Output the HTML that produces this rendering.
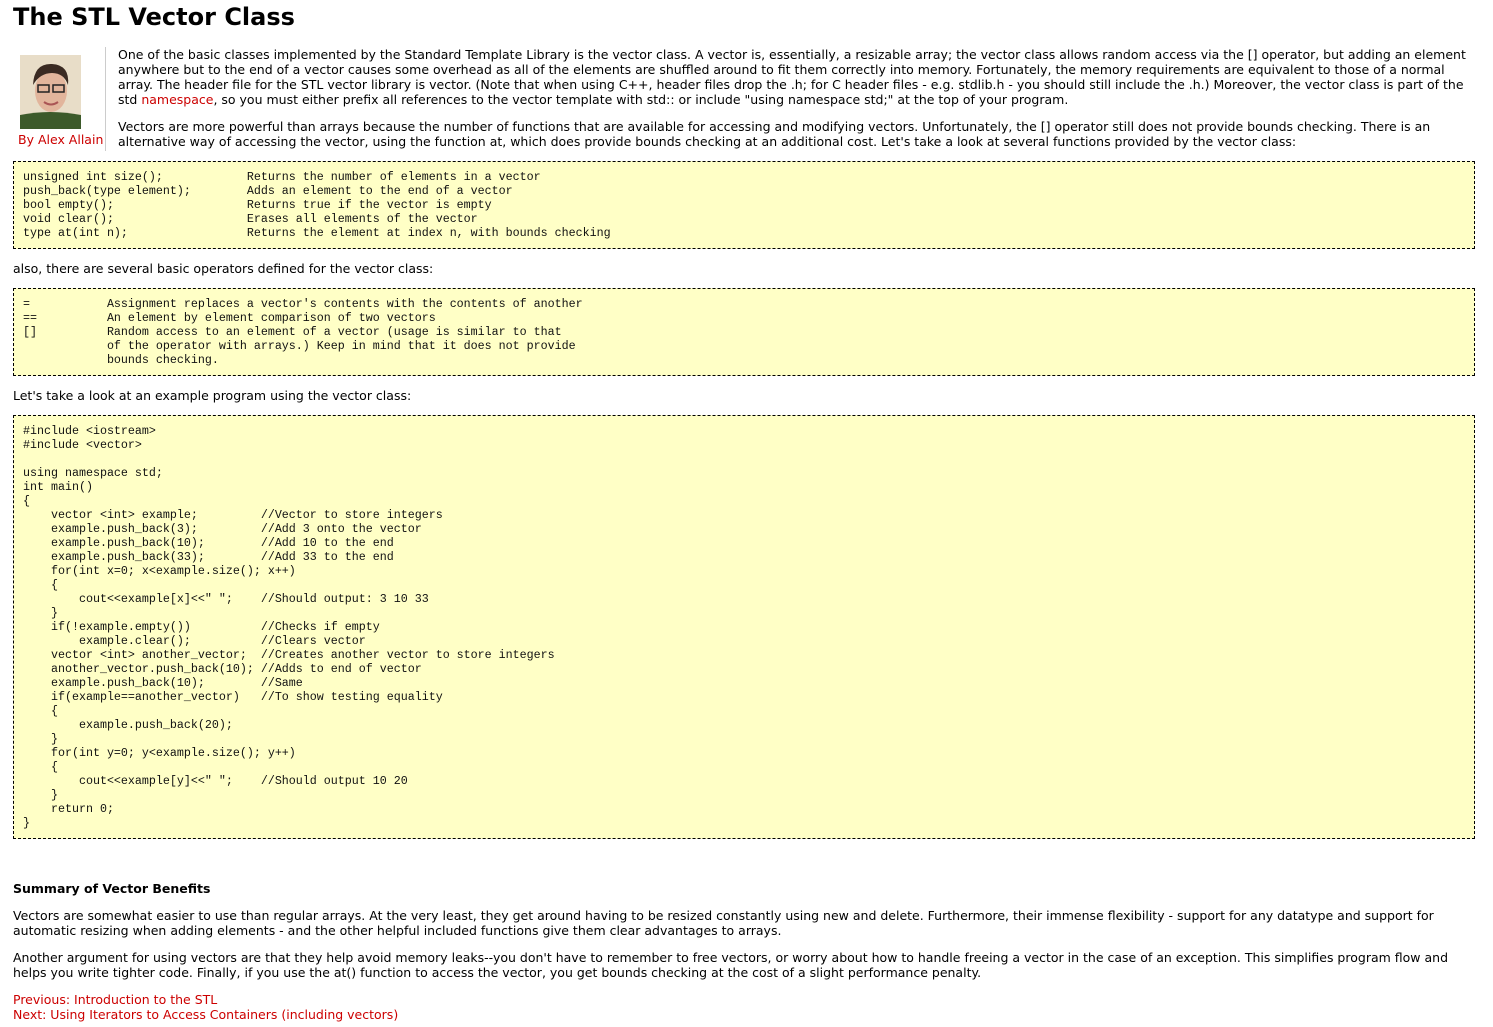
<!DOCTYPE html>
<html><head><meta charset="utf-8"><style>
body{margin:0;background:#fff;font-family:"DejaVu Sans",Verdana,sans-serif;font-size:12.5px;color:#000;width:1493px;height:1027px;overflow:hidden;position:relative}
.a{position:absolute;white-space:nowrap;line-height:15px}
h1{position:absolute;left:13px;top:2px;margin:0;font-size:24px;line-height:30px;font-weight:bold}
a,.r{color:#c00;text-decoration:none}
.box{position:absolute;left:13px;width:1460px;background:#ffffc6;border:1px dashed #000}
pre{margin:0;position:absolute;left:9px;font-family:"Liberation Mono","Courier New",monospace;font-size:11.67px;line-height:14px;color:#111}
</style></head><body>
<h1>The STL Vector Class</h1>
<svg style="position:absolute;left:20px;top:55px" width="61" height="74" viewBox="0 0 61 74">
<rect width="61" height="74" fill="#e8ddc8"/>
<path d="M0 60 Q30 54 61 60 V74 H0Z" fill="#3c5a2a"/>
<ellipse cx="31" cy="36" rx="16" ry="21" fill="#e2b59c"/>
<path d="M13 30 Q14 8 32 9 Q50 10 48 30 Q44 18 32 18 Q20 18 13 30Z" fill="#3a2a22"/>
<rect x="18" y="30" width="11" height="7" fill="none" stroke="#222" stroke-width="1.5"/>
<rect x="33" y="30" width="11" height="7" fill="none" stroke="#222" stroke-width="1.5"/>
<path d="M24 47 Q31 52 38 47" stroke="#a55" stroke-width="2" fill="none"/>
</svg>
<div class="a r" style="left:18px;top:132px;font-size:12.5px">By Alex Allain</div>
<div style="position:absolute;left:105px;top:47px;width:1px;height:104px;background:#ccc"></div>
<div class="a" style="left:118px;top:47px">One of the basic classes implemented by the Standard Template Library is the vector class. A vector is, essentially, a resizable array; the vector class allows random access via the [] operator, but adding an element<br>anywhere but to the end of a vector causes some overhead as all of the elements are shuffled around to fit them correctly into memory. Fortunately, the memory requirements are equivalent to those of a normal<br>array. The header file for the STL vector library is vector. (Note that when using C++, header files drop the .h; for C header files - e.g. stdlib.h - you should still include the .h.) Moreover, the vector class is part of the<br>std <a>namespace</a>, so you must either prefix all references to the vector template with std:: or include "using namespace std;" at the top of your program.</div>
<div class="a" style="left:118px;top:119px">Vectors are more powerful than arrays because the number of functions that are available for accessing and modifying vectors. Unfortunately, the [] operator still does not provide bounds checking. There is an<br>alternative way of accessing the vector, using the function at, which does provide bounds checking at an additional cost. Let's take a look at several functions provided by the vector class:</div>
<div class="box" style="top:161px;height:86px"><pre style="top:8px">unsigned int size();            Returns the number of elements in a vector
push_back(type element);        Adds an element to the end of a vector
bool empty();                   Returns true if the vector is empty
void clear();                   Erases all elements of the vector
type at(int n);                 Returns the element at index n, with bounds checking</pre></div>
<div class="a" style="left:13px;top:261px">also, there are several basic operators defined for the vector class:</div>
<div class="box" style="top:288px;height:86px"><pre style="top:8px">=           Assignment replaces a vector's contents with the contents of another
==          An element by element comparison of two vectors
[]          Random access to an element of a vector (usage is similar to that
            of the operator with arrays.) Keep in mind that it does not provide
            bounds checking.</pre></div>
<div class="a" style="left:13px;top:388px">Let's take a look at an example program using the vector class:</div>
<div class="box" style="top:415px;height:422px"><pre style="top:8px">#include &lt;iostream&gt;
#include &lt;vector&gt;

using namespace std;
int main()
{
    vector &lt;int&gt; example;         //Vector to store integers
    example.push_back(3);         //Add 3 onto the vector
    example.push_back(10);        //Add 10 to the end
    example.push_back(33);        //Add 33 to the end
    for(int x=0; x&lt;example.size(); x++)
    {
        cout&lt;&lt;example[x]&lt;&lt;" ";    //Should output: 3 10 33
    }
    if(!example.empty())          //Checks if empty
        example.clear();          //Clears vector
    vector &lt;int&gt; another_vector;  //Creates another vector to store integers
    another_vector.push_back(10); //Adds to end of vector
    example.push_back(10);        //Same
    if(example==another_vector)   //To show testing equality
    {
        example.push_back(20);
    }
    for(int y=0; y&lt;example.size(); y++)
    {
        cout&lt;&lt;example[y]&lt;&lt;" ";    //Should output 10 20
    }
    return 0;
}</pre></div>
<div class="a" style="left:13px;top:881px;font-weight:bold">Summary of Vector Benefits</div>
<div class="a" style="left:13px;top:908px">Vectors are somewhat easier to use than regular arrays. At the very least, they get around having to be resized constantly using new and delete. Furthermore, their immense flexibility - support for any datatype and support for<br>automatic resizing when adding elements - and the other helpful included functions give them clear advantages to arrays.</div>
<div class="a" style="left:13px;top:950px">Another argument for using vectors are that they help avoid memory leaks--you don't have to remember to free vectors, or worry about how to handle freeing a vector in the case of an exception. This simplifies program flow and<br>helps you write tighter code. Finally, if you use the at() function to access the vector, you get bounds checking at the cost of a slight performance penalty.</div>
<div class="a r" style="left:13px;top:992px">Previous: Introduction to the STL<br>Next: Using Iterators to Access Containers (including vectors)</div>
</body></html>
